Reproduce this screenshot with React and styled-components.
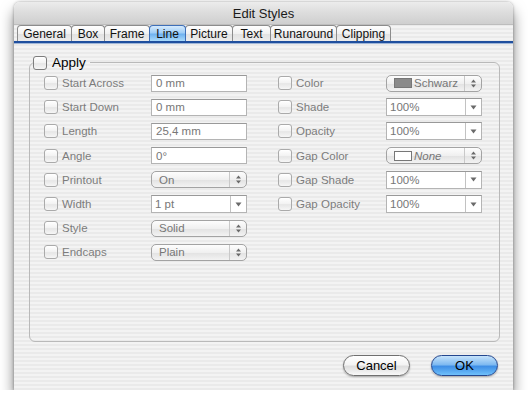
import styled, { createGlobalStyle } from "styled-components";

const GlobalStyle = createGlobalStyle`
  html, body { margin: 0; padding: 0; background: #fff; }
  body { font-family: "Liberation Sans", Arial, sans-serif; }
`;

const stripes = `repeating-linear-gradient(180deg, #f3f3f3 0px, #f3f3f3 2px, #eaeaea 2px, #eaeaea 4px)`;

const tabs = [
  { label: "General", w: 55 },
  { label: "Box", w: 34 },
  { label: "Frame", w: 46 },
  { label: "Line", w: 37, active: true },
  { label: "Picture", w: 48 },
  { label: "Text", w: 39 },
  { label: "Runaround", w: 67 },
  { label: "Clipping", w: 55 },
];

const leftRows = [
  { label: "Start Across", kind: "field", value: "0 mm" },
  { label: "Start Down", kind: "field", value: "0 mm" },
  { label: "Length", kind: "field", value: "25,4 mm" },
  { label: "Angle", kind: "field", value: "0°" },
  { label: "Printout", kind: "popup", value: "On" },
  { label: "Width", kind: "combo", value: "1 pt" },
  { label: "Style", kind: "popup", value: "Solid" },
  { label: "Endcaps", kind: "popup", value: "Plain" },
];

const rightRows = [
  { label: "Color", kind: "color", value: "Schwarz", swatch: "#8a8a8a" },
  { label: "Shade", kind: "combo", value: "100%" },
  { label: "Opacity", kind: "combo", value: "100%" },
  { label: "Gap Color", kind: "color", value: "None", swatch: "#fff", italic: true },
  { label: "Gap Shade", kind: "combo", value: "100%" },
  { label: "Gap Opacity", kind: "combo", value: "100%" },
];

function UpDown() {
  return (
    <svg width="7" height="11" viewBox="0 0 7 11">
      <path d="M3.5 1.5 L6 4.5 H1 Z M3.5 9.5 L6 6.5 H1 Z" fill="#6a6a6a" />
    </svg>
  );
}

function Down() {
  return (
    <svg width="7" height="5" viewBox="0 0 7 5">
      <path d="M0.5 0.5 H6.5 L3.5 4.5 Z" fill="#6a6a6a" />
    </svg>
  );
}

function Control({ row }) {
  if (row.kind === "field") return <Field>{row.value}</Field>;
  if (row.kind === "combo")
    return (
      <Combo>
        <ComboText>{row.value}</ComboText>
        <ComboButton><Down /></ComboButton>
      </Combo>
    );
  return (
    <Popup>
      <PopupText $italic={row.italic}>
        {row.swatch && <Swatch $color={row.swatch} />}
        {row.value}
      </PopupText>
      <PopupArrows><UpDown /></PopupArrows>
    </Popup>
  );
}

function Column({ rows, labelW, width }) {
  return (
    <Col $w={width}>
      {rows.map((r) => (
        <Row key={r.label} $labelW={labelW}>
          <Check />
          <Label>{r.label}</Label>
          <Control row={r} />
        </Row>
      ))}
    </Col>
  );
}

export default function App() {
  return (
    <>
      <GlobalStyle />
      <Window>
        <TitleBar>Edit Styles</TitleBar>
        <TabStrip>
          {tabs.map((t) => (
            <Tab key={t.label} $w={t.w} $active={t.active}>{t.label}</Tab>
          ))}
        </TabStrip>
        <TabLine />
        <Body>
          <Group>
            <Legend>
              <BigCheck />
              <span>Apply</span>
            </Legend>
            <Columns>
              <Column rows={leftRows} labelW={89} width={234} />
              <Column rows={rightRows} labelW={90} width={220} />
            </Columns>
          </Group>
          <Buttons>
            <PushButton>Cancel</PushButton>
            <PushButton $default>OK</PushButton>
          </Buttons>
        </Body>
      </Window>
    </>
  );
}

const Window = styled.div`
  margin: 2px 0 0 14px;
  width: 499px;
  height: 388px;
  border-radius: 6px 6px 0 0;
  background: ${stripes};
  box-shadow: 0 9px 14px rgba(0, 0, 0, 0.5), 0 0 3px rgba(0, 0, 0, 0.35);
  display: flex;
  flex-direction: column;
  overflow: hidden;
`;

const TitleBar = styled.div`
  height: 23px;
  flex: none;
  background: linear-gradient(180deg, #ececec 0%, #dcdcdc 50%, #cfcfcf 100%);
  border-bottom: 1px solid #bdbdbd;
  box-sizing: border-box;
  display: flex;
  align-items: center;
  justify-content: center;
  font-size: 13px;
  color: #1a1a1a;
  padding-top: 1px;
`;

const TabStrip = styled.div`
  display: flex;
  align-items: flex-end;
  height: 16px;
  padding-left: 3px;
  flex: none;
`;

const Tab = styled.div`
  width: ${(p) => p.$w}px;
  height: 16px;
  box-sizing: border-box;
  border: 1px solid ${(p) => (p.$active ? "#3e6fb8" : "#8c8c8c")};
  border-bottom: none;
  border-radius: 4px 4px 0 0;
  margin-right: -1px;
  background: ${(p) =>
    p.$active
      ? "linear-gradient(180deg, #d6ebfd 0%, #9fcdf6 45%, #6fb2f0 55%, #a9dafb 100%)"
      : "linear-gradient(180deg, #ffffff 0%, #f1f1f1 50%, #e2e2e2 55%, #ececec 100%)"};
  font-size: 12px;
  color: #111;
  display: flex;
  align-items: center;
  justify-content: center;
  position: relative;
  z-index: ${(p) => (p.$active ? 1 : 0)};
`;

const TabLine = styled.div`
  height: 2px;
  flex: none;
  background: #1f4f9e;
  border-bottom: 1px solid #9fb6d8;
`;

const Body = styled.div`
  flex: 1;
  display: flex;
  flex-direction: column;
  padding: 11px 0 0 15px;
`;

const Group = styled.fieldset`
  margin: 0;
  padding: 1px 0 0 14px;
  width: 471px;
  height: 287px;
  box-sizing: border-box;
  border: 1px solid #b9b9b9;
  border-radius: 6px;
`;

const Legend = styled.legend`
  margin-left: -11px;
  padding: 0 4px 0 0;
  display: flex;
  align-items: center;
  gap: 5px;
  font-size: 13.5px;
  color: #000;
  height: 15px;
`;

const Check = styled.div`
  width: 14px;
  height: 14px;
  box-sizing: border-box;
  border: 1px solid #aaaaaa;
  border-radius: 3px;
  background: linear-gradient(180deg, #ffffff 0%, #f2f2f2 50%, #e6e6e6 55%, #f6f6f6 100%);
  box-shadow: inset 0 1px 1px rgba(255, 255, 255, 0.8);
`;

const BigCheck = styled(Check)`
  border-color: #7d7d7d;
`;

const Columns = styled.div`
  display: flex;
`;

const Col = styled.div`
  width: ${(p) => p.$w}px;
  display: flex;
  flex-direction: column;
`;

const Row = styled.div`
  height: 24.2px;
  display: grid;
  grid-template-columns: 18px ${(p) => p.$labelW}px 96px;
  align-items: center;
`;

const Label = styled.div`
  font-size: 11.5px;
  color: #7c7c7c;
`;

const Field = styled.div`
  height: 17px;
  box-sizing: border-box;
  border: 1px solid #b4b4b4;
  border-top-color: #999;
  background: #fff;
  font-size: 11.5px;
  color: #777;
  padding-left: 4px;
  display: flex;
  align-items: center;
`;

const Combo = styled.div`
  height: 18px;
  display: flex;
  box-sizing: border-box;
  border: 1px solid #b4b4b4;
  border-top-color: #999;
  background: #fff;
`;

const ComboText = styled.div`
  flex: 1;
  font-size: 11.5px;
  color: #777;
  padding-left: 3px;
  display: flex;
  align-items: center;
`;

const ComboButton = styled.div`
  width: 15px;
  border-left: 1px solid #c2c2c2;
  display: flex;
  align-items: center;
  justify-content: center;
`;

const Popup = styled.div`
  height: 17px;
  box-sizing: border-box;
  border: 1px solid #a3a3a3;
  border-radius: 5px;
  background: linear-gradient(180deg, #fdfdfd 0%, #f0f0f0 50%, #e3e3e3 55%, #f3f3f3 100%);
  display: flex;
  align-items: center;
`;

const PopupText = styled.div`
  flex: 1;
  font-size: 11.5px;
  font-style: ${(p) => (p.$italic ? "italic" : "normal")};
  color: #777;
  padding-left: 7px;
  display: flex;
  align-items: center;
  gap: 1px;
`;

const Swatch = styled.span`
  width: 18px;
  height: 10px;
  box-sizing: border-box;
  border: 1px solid #777;
  background: ${(p) => p.$color};
  margin-right: 1px;
`;

const PopupArrows = styled.div`
  width: 16px;
  height: 100%;
  border-left: 1px solid #c9c9c9;
  display: flex;
  align-items: center;
  justify-content: center;
`;

const Buttons = styled.div`
  display: flex;
  justify-content: flex-end;
  gap: 21px;
  padding-right: 15px;
  margin-top: 13px;
`;

const PushButton = styled.div`
  width: 67px;
  height: 21px;
  box-sizing: border-box;
  border-radius: 11px;
  border: 1px solid ${(p) => (p.$default ? "#24478f" : "#6f6f6f")};
  background: ${(p) =>
    p.$default
      ? "linear-gradient(180deg, #c6e3fb 0%, #7fbaf1 45%, #3f8fe6 55%, #6fc0fa 100%)"
      : "linear-gradient(180deg, #ffffff 0%, #f4f4f4 45%, #dedede 55%, #f8f8f8 100%)"};
  box-shadow: 0 1px 2px rgba(0, 0, 0, 0.3);
  font-size: 13px;
  color: #000;
  display: flex;
  align-items: center;
  justify-content: center;
`;
